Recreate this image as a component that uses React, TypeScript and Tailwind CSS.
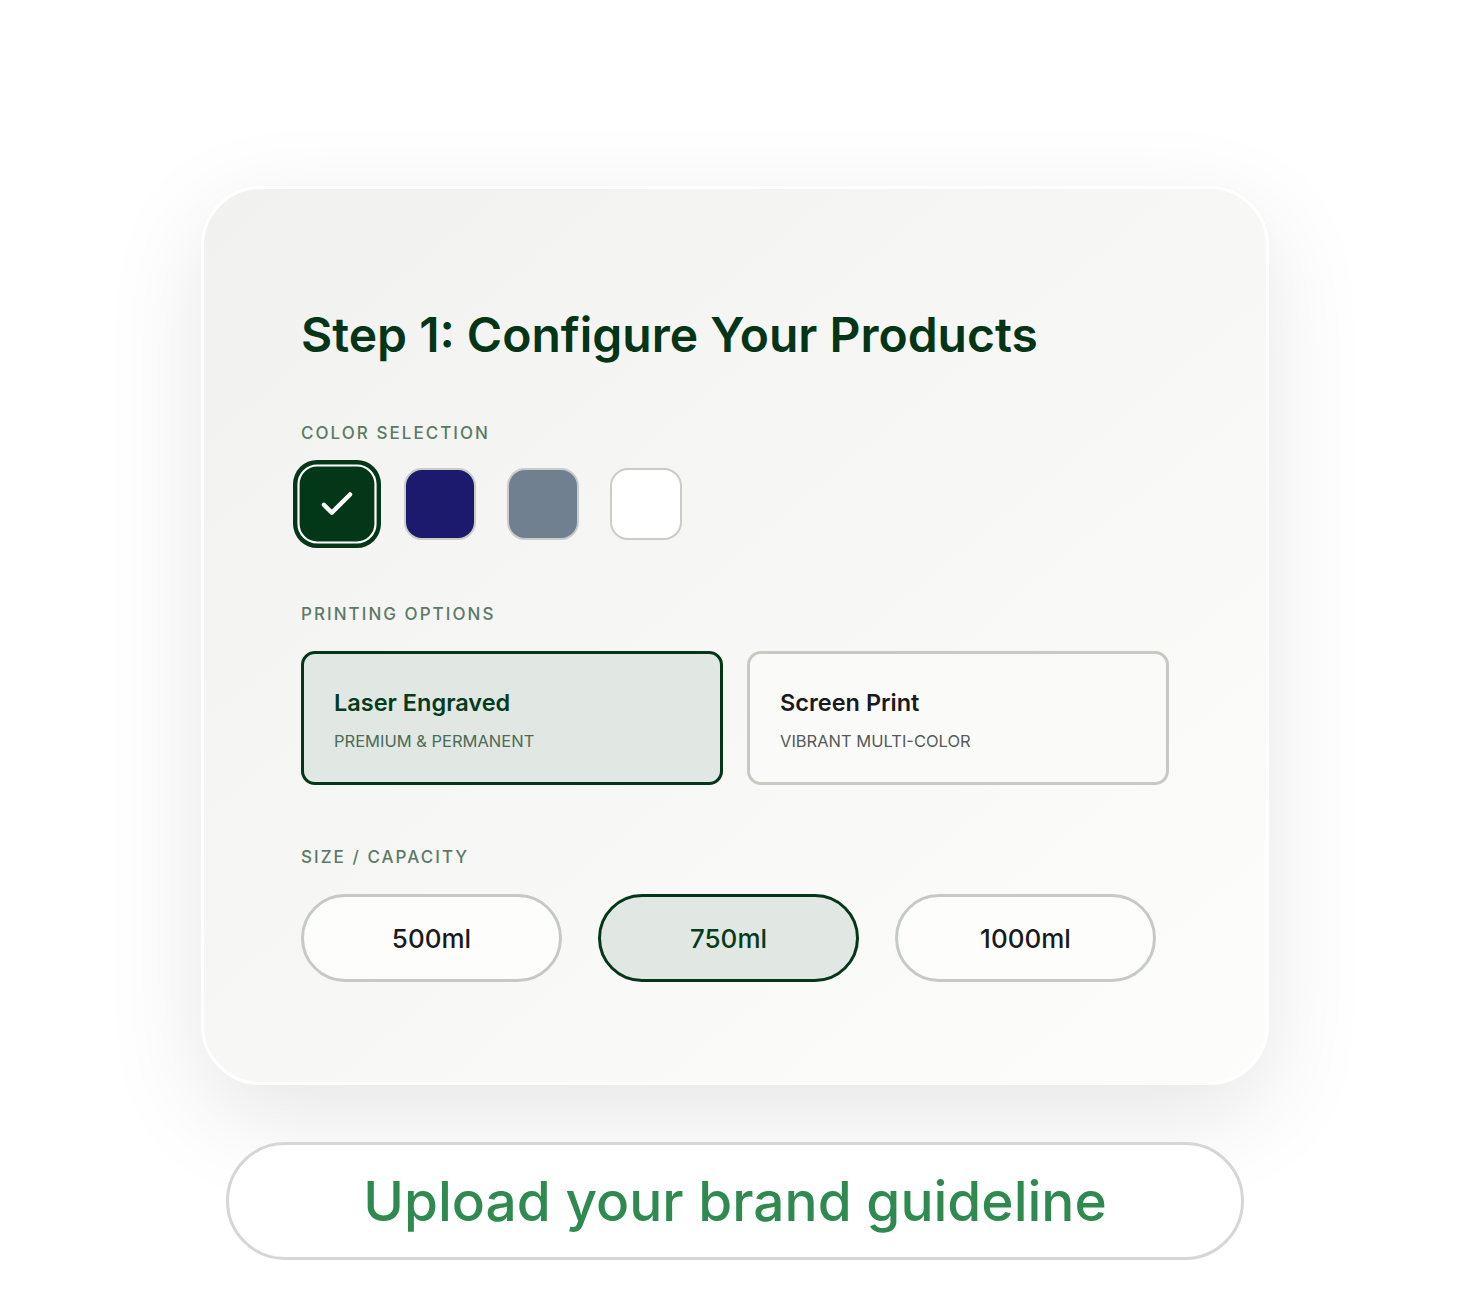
import { useState } from "react";

const swatches = [
  { id: "forest", bg: "bg-[#043618]" },
  { id: "navy", bg: "bg-[#1b1a6c]" },
  { id: "slate", bg: "bg-[#708090]" },
  { id: "white", bg: "bg-white" },
];

const printing = [
  { id: "laser", title: "Laser Engraved", sub: "PREMIUM & PERMANENT" },
  { id: "screen", title: "Screen Print", sub: "VIBRANT MULTI-COLOR" },
];

const sizes = ["500ml", "750ml", "1000ml"];

export default function App() {
  const [color, setColor] = useState("forest");
  const [print, setPrint] = useState("laser");
  const [size, setSize] = useState("750ml");

  return (
    <div className="min-h-[1300px] w-full bg-white font-['Inter',sans-serif]">
      <div className="flex flex-col items-center pt-[186px]">
        {/* CONFIG CARD */}
        <div className="w-[1068px] rounded-[60px] border-[3px] border-white bg-gradient-to-br from-[#f1f1ef] to-[#fdfdfc] px-[97px] pt-[122px] pb-[100px] shadow-[0_30px_100px_rgba(0,0,0,0.1)]">
          <h1 className="text-[48px] leading-none font-semibold text-[#033516]">
            Step 1: Configure Your Products
          </h1>

          {/* COLOR */}
          <p className="mt-[66px] text-[17px] leading-none font-medium tracking-[0.12em] text-[#5b7a66]">
            COLOR SELECTION
          </p>
          <div className="mt-[26px] flex gap-[31px]">
            {swatches.map((s) => {
              const active = color === s.id;
              return (
                <button
                  key={s.id}
                  onClick={() => setColor(s.id)}
                  className={
                    active
                      ? `flex h-[72px] w-[72px] scale-110 items-center justify-center rounded-[18px] border-2 border-white ring-4 ring-[#043618] ${s.bg}`
                      : `h-[72px] w-[72px] rounded-[18px] border-2 border-[#c8cdc7] ${s.bg}`
                  }
                >
                  {active && (
                    <svg width="38" height="38" viewBox="0 0 24 24" fill="none" stroke="white" strokeWidth="2.5" strokeLinecap="round" strokeLinejoin="round">
                      <path d="M4.5 12.5l4.5 4.5L19.5 6.5" />
                    </svg>
                  )}
                </button>
              );
            })}
          </div>

          {/* PRINTING */}
          <p className="mt-[66px] text-[17px] leading-none font-medium tracking-[0.12em] text-[#5b7a66]">
            PRINTING OPTIONS
          </p>
          <div className="mt-[28px] flex gap-[24px]">
            {printing.map((p) => {
              const active = print === p.id;
              return (
                <button
                  key={p.id}
                  onClick={() => setPrint(p.id)}
                  className={
                    active
                      ? "flex h-[134px] w-[422px] flex-col items-start justify-center rounded-[14px] border-[3px] border-[#043618] bg-[#e1e7e2] px-[30px] pt-[4px] text-left"
                      : "flex h-[134px] w-[422px] flex-col items-start justify-center rounded-[14px] border-[3px] border-[#c5cbc3] bg-[#fafaf9] px-[30px] pt-[4px] text-left"
                  }
                >
                  <span className={active ? "text-[23.5px] leading-none font-semibold text-[#053a1b]" : "text-[23.5px] leading-none font-semibold text-[#1a1a1a]"}>
                    {p.title}
                  </span>
                  <span className={active ? "mt-[19px] text-[16.5px] leading-none text-[#4a6b56]" : "mt-[19px] text-[16.5px] leading-none text-[#555a57]"}>
                    {p.sub}
                  </span>
                </button>
              );
            })}
          </div>

          {/* SIZE */}
          <p className="mt-[64px] text-[17px] leading-none font-medium tracking-[0.12em] text-[#5b7a66]">
            SIZE / CAPACITY
          </p>
          <div className="mt-[28px] flex gap-[36px]">
            {sizes.map((s) => {
              const active = size === s;
              return (
                <button
                  key={s}
                  onClick={() => setSize(s)}
                  className={
                    active
                      ? "flex h-[88px] w-[261px] items-center justify-center rounded-full border-[3px] border-[#043618] bg-[#e1e7e2] text-[26px] font-medium text-[#053a1b]"
                      : "flex h-[88px] w-[261px] items-center justify-center rounded-full border-[3px] border-[#c5cbc3] bg-[#fdfdfc] text-[26px] font-medium text-[#1a1a1a]"
                  }
                >
                  {s}
                </button>
              );
            })}
          </div>
        </div>

        {/* UPLOAD */}
        <button className="mt-[57px] flex h-[118px] w-[1018px] items-center justify-center rounded-full border-[3px] border-[#d6d6d6] bg-white text-[55px] font-medium text-[#2e8a4e]">
          Upload your brand guideline
        </button>
      </div>
    </div>
  );
}
